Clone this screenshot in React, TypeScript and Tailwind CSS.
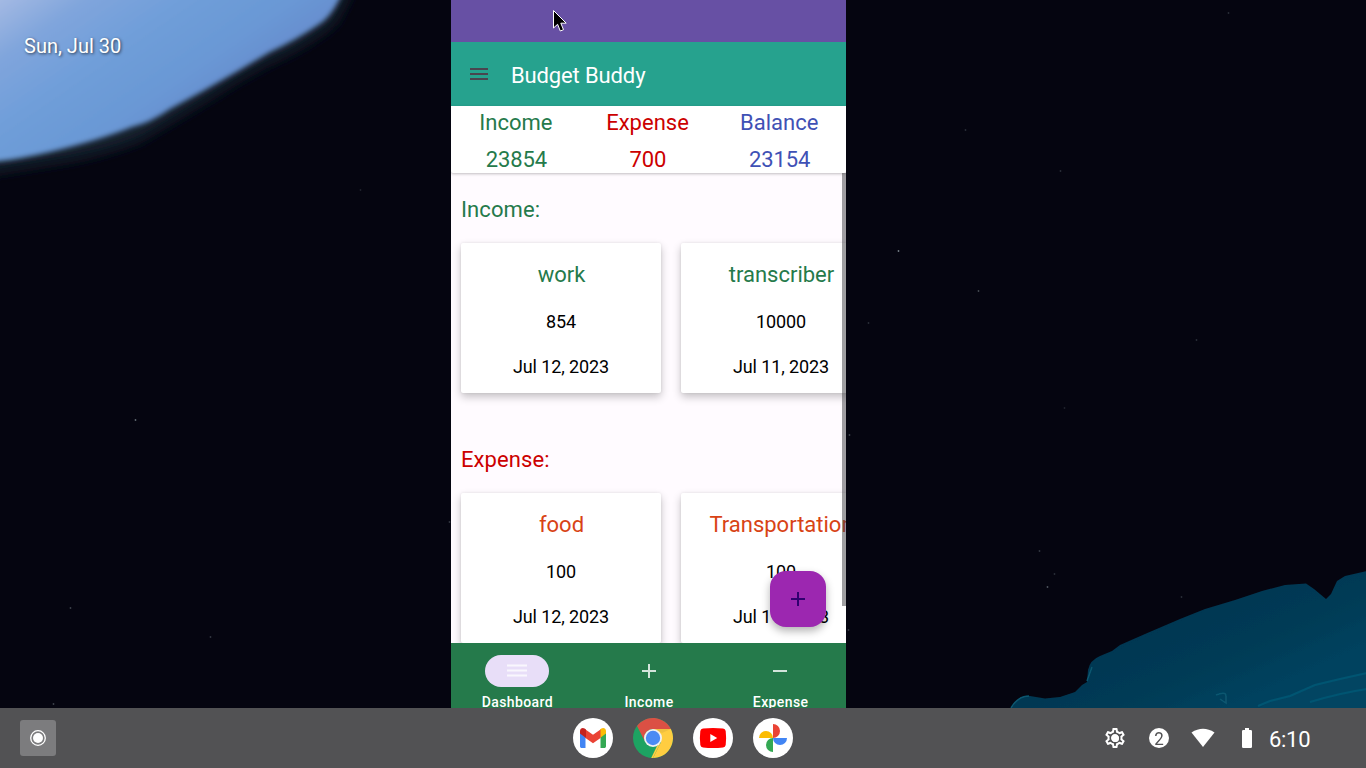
import React from "react";
import { MdOutlineSettings } from "react-icons/md";

type Entry = { name: string; amount: string; date: string };

const incomeEntries: Entry[] = [
  { name: "work", amount: "854", date: "Jul 12, 2023" },
  { name: "transcriber", amount: "10000", date: "Jul 11, 2023" },
];

const expenseEntries: Entry[] = [
  { name: "food", amount: "100", date: "Jul 12, 2023" },
  { name: "Transportation", amount: "100", date: "Jul 11, 2023" },
];

const stars = [
  [135, 420, 0.5], [70, 608, 0.3], [210, 637, 0.25], [898, 251, 0.6], [978, 291, 0.35],
  [868, 323, 0.2], [1060, 171, 0.2], [1047, 587, 0.4], [1054, 574, 0.2], [1181, 597, 0.2],
  [1228, 13, 0.2], [965, 130, 0.2], [1196, 340, 0.2], [53, 704, 0.3], [1064, 408, 0.15],
  [848, 630, 0.25], [449, 522, 0.25], [360, 190, 0.15], [1039, 551, 0.25], [849, 435, 0.3],
];

function Wallpaper() {
  return (
    <svg className="absolute inset-0" width="1366" height="708" viewBox="0 0 1366 708" aria-hidden="true">
      <defs>
        <linearGradient id="sky" gradientUnits="userSpaceOnUse" x1="0" y1="0" x2="110" y2="160">
          <stop offset="0" stopColor="#a3b9e3" />
          <stop offset="0.25" stopColor="#80a5dc" />
          <stop offset="0.55" stopColor="#6f9ed9" />
          <stop offset="0.85" stopColor="#6a98d5" />
          <stop offset="1" stopColor="#6790d0" />
        </linearGradient>
        <filter id="soft" x="-20%" y="-20%" width="140%" height="140%"><feGaussianBlur stdDeviation="2.4" /></filter>
        <filter id="halo" x="-20%" y="-30%" width="140%" height="160%"><feGaussianBlur stdDeviation="7" /></filter>
        <filter id="edge"><feGaussianBlur stdDeviation="0.6" /></filter>
        <linearGradient id="sea" gradientUnits="userSpaceOnUse" x1="1150" y1="610" x2="1200" y2="720">
          <stop offset="0" stopColor="#033550" />
          <stop offset="0.6" stopColor="#033b56" />
          <stop offset="1" stopColor="#02425e" />
        </linearGradient>
      </defs>
      <path d="M-30-30H356L346 2L334 24Q300 50 270 62L238 80L203 102L170 122L140 140Q100 156 50 163L-30 176Z" fill="#15212f" filter="url(#halo)" />
      <path d="M-30-30H354L339 0Q330 18 318 25Q296 40 270 52L238 71L203 91L170 109Q150 123 132 127Q100 140 50 152Q20 159 0 161L-30 165Z" fill="url(#sky)" filter="url(#soft)" />
      <path d="M1011 709L1015 703Q1021 694 1030 696L1045 698.5L1060 697L1075 692L1082 685L1087 682L1088 670Q1090 660 1100 656L1112 651L1120 645L1145 634L1180 619L1205 609L1235 600L1262 591L1285 585L1306 583.5L1314 589L1326 599L1331 594L1337 581L1345 576L1367 571V709Z" fill="url(#sea)" filter="url(#edge)" />
      <path d="M1258 709L1270 701L1290 695L1315 685L1340 679L1367 673V709Z" fill="#04486680" />
      <path d="M1258 706L1270 701L1290 696L1315 685L1340 679L1367 673M1310 702Q1340 693 1367 689" fill="none" stroke="#055572" strokeWidth="2" filter="url(#edge)" />
      <path d="M1011 708Q1018 696 1029 696M1087 681L1092 667M1216 695Q1226 691 1226 696V703L1220 699" fill="none" stroke="#0a5770" strokeWidth="1.5" filter="url(#edge)" />
      {stars.map(([x, y, o]) => (
        <circle key={`${x}-${y}`} cx={x + 0.5} cy={y} r="0.9" fill="#bfd0d5" opacity={o} />
      ))}
    </svg>
  );
}

function EntryCard({ entry, tone }: { entry: Entry; tone: string }) {
  return (
    <article className="flex h-[150px] w-[200px] shrink-0 flex-col items-center rounded-[2px] bg-white text-[18px] tracking-[-0.1px] text-black shadow-[0_4px_9px_rgba(0,0,0,0.23),0_0_3px_rgba(0,0,0,0.08)]">
      <h3 className={`mt-[17px] pl-px text-[22px] leading-[29px] tracking-normal whitespace-nowrap ${tone}`}>{entry.name}</h3>
      <p className="mt-[22px] leading-[22px]">{entry.amount}</p>
      <p className="mt-[23px] leading-[22px] whitespace-nowrap">{entry.date}</p>
    </article>
  );
}

function Section({ title, titleTone, tone, entries }: { title: string; titleTone: string; tone: string; entries: Entry[] }) {
  return (
    <section className="h-[250px] pl-[10px] pt-[22px]">
      <h2 className={`text-[22px] leading-[29px] tracking-[0.1px] ${titleTone}`}>{title}</h2>
      <div className="mt-[19px] flex gap-5">
        {entries.map((entry) => (
          <EntryCard key={entry.name} entry={entry} tone={tone} />
        ))}
      </div>
    </section>
  );
}

function Total({ label, value, tone }: { label: string; value: string; tone: string }) {
  return (
    <div className={`flex flex-col items-center pt-[2px] pr-[2px] text-[22px] leading-[29px] ${tone}`}>
      <span>{label}</span>
      <span className="mt-2 pl-px tracking-[-0.1px]">{value}</span>
    </div>
  );
}

function NavItem({ label, active, children }: { label: string; active?: boolean; children: React.ReactNode }) {
  return (
    <button className="flex flex-col items-center pt-3">
      <span className={`flex h-8 w-16 items-center justify-center rounded-full ${active ? "bg-[#e8def8]" : ""}`}>
        {children}
      </span>
      <span className="mt-[7px] pl-px text-[14px] leading-4 font-medium tracking-[0.4px] text-white">{label}</span>
    </button>
  );
}

function BudgetApp() {
  return (
    <main className="relative flex h-[708px] w-[395px] flex-col overflow-hidden bg-[#fffbff]">
      <div className="h-[42px] shrink-0 bg-[#6750a4]" />
      <header className="flex h-16 shrink-0 items-center bg-[#26a28e] pl-4 text-white">
        <svg className="shrink-0" width="24" height="24" viewBox="0 0 24 24" fill="#49454f">
          <path d="M3 6h18v2H3zM3 11h18v2H3zM3 16h18v2H3z" />
        </svg>
        <h1 className="ml-5 pt-[3px] text-[22px] leading-7 tracking-[-0.13px]">Budget Buddy</h1>
      </header>
      <div className="z-10 grid h-[67px] shrink-0 grid-cols-3 rounded-b-[2px] bg-white shadow-[0_1px_3px_rgba(0,0,0,0.25)]">
        <Total label="Income" value="23854" tone="text-[#257a4b]" />
        <Total label="Expense" value="700" tone="text-[#cc0000]" />
        <Total label="Balance" value="23154" tone="text-[#3f51b5]" />
      </div>
      <div className="relative h-[470px] shrink-0 overflow-hidden">
        <Section title="Income:" titleTone="text-[#257a4b]" tone="text-[#257a4b]" entries={incomeEntries} />
        <Section title="Expense:" titleTone="text-[#cc0000]" tone="text-[#d84315]" entries={expenseEntries} />
        <div className="absolute top-0 right-0 h-[433px] w-1 bg-[#403f43]/50" />
        <button className="absolute right-5 bottom-4 flex size-14 items-center justify-center rounded-2xl bg-[#9c27b0] shadow-[0_4px_8px_rgba(0,0,0,0.3)]">
          <svg width="24" height="24" viewBox="0 0 24 24" fill="#31006f"><path d="M11 5h2v6h6v2h-6v6h-2v-6H5v-2h6z" /></svg>
        </button>
      </div>
      <nav className="grid h-[65px] shrink-0 grid-cols-3 overflow-hidden bg-[#257a4b]">
        <NavItem label="Dashboard" active>
          <svg width="24" height="24" viewBox="0 0 24 24" fill="#fff">
            <path d="M2 5h20v3H2zM2 10h20v3H2zM2 15h20v3H2z" opacity="0.4" />
            <path d="M2 6h20v1H2zM2 11h20v1H2zM2 16h20v1H2z" opacity="0.6" />
          </svg>
        </NavItem>
        <NavItem label="Income">
          <svg className="ml-px" width="24" height="24" viewBox="0 0 24 24" fill="#d3e4db"><path d="M11 5h2v6h6v2h-6v6h-2v-6H5v-2h6z" /></svg>
        </NavItem>
        <NavItem label="Expense">
          <svg width="24" height="24" viewBox="0 0 24 24" fill="#d3e4db"><path d="M5 11h14v2H5z" /></svg>
        </NavItem>
      </nav>
    </main>
  );
}

function GmailIcon() {
  return (
    <svg width="40" height="40" viewBox="0 0 40 40">
      <circle cx="20" cy="20" r="20" fill="#fff" />
      <path d="M7 13v15.200c0 1 .8 1.800 1.800 1.800H12.500V17.500z" fill="#4285f4" />
      <path d="M27.500 30h3.700c1 0 1.800-.8 1.800-1.800V13l-5.500 4.500z" fill="#34a853" />
      <path d="M27 11.500v8.500l6-4.500V13c0-2.500-2.600-3.900-4.600-2.500z" fill="#fbbc04" />
      <path d="M12.500 20v-8.500l7.500 5.200 7.500-5.200V20l-7.500 5.200z" fill="#ea4335" />
      <path d="M7 13v2.500l6 4.500v-8.500l-1.400-1C9.600 9 7 10.500 7 13z" fill="#c5221f" />
    </svg>
  );
}

function ChromeIcon() {
  return (
    <svg width="40" height="40" viewBox="0 0 40 40">
      <circle cx="20" cy="20" r="20" fill="#1da362" />
      <path d="M20 11H37.860A20 20 0 0 1 20 40L27.800 24.500Z" fill="#ffcd41" />
      <path d="M4.020 8A20 20 0 0 1 37.860 11H20A9 9 0 0 0 12.200 24Z" fill="#db5044" />
      <path d="M20 40L27.800 24.500L24 28L18.200 40Z" fill="#ffcd41" />
      <path d="M20 11H37.860L29 15Z" fill="#d2aa3b" opacity="0.35" />
      <circle cx="20" cy="20" r="9" fill="#f1f1f1" />
      <circle cx="20" cy="20" r="7.200" fill="#4b8bf4" />
    </svg>
  );
}

function YoutubeIcon() {
  return (
    <svg width="40" height="40" viewBox="0 0 40 40">
      <circle cx="20" cy="20" r="20" fill="#fff" />
      <path d="M10 10.500Q20 9.500 30 10.500Q32.300 10.800 32.700 13Q33.500 20 32.700 27Q32.300 29.200 30 29.500Q20 30.500 10 29.500Q7.700 29.200 7.300 27Q6.500 20 7.300 13Q7.700 10.800 10 10.500Z" fill="#f00" />
      <path d="M17.300 16v8l6.900-4z" fill="#fff" />
    </svg>
  );
}

function PhotosIcon() {
  return (
    <svg width="40" height="40" viewBox="0 0 40 40">
      <circle cx="20" cy="20" r="20" fill="#fff" />
      <path d="M20 6a7 7 0 0 1 0 14z" fill="#ea4335" />
      <path d="M34 20a7 7 0 0 1-14 0z" fill="#4285f4" />
      <path d="M20 34a7 7 0 0 1 0-14z" fill="#34a853" />
      <path d="M6 20a7 7 0 0 1 14 0z" fill="#fbbc04" />
    </svg>
  );
}

function Shelf() {
  return (
    <footer className="relative grid h-[60px] grid-cols-[573px_1fr_auto] items-center bg-[#525254] text-white">
      <div className="pl-5">
        <button className="flex size-9 items-center justify-center rounded-[3px] bg-[#7c7c7e]">
          <svg width="18" height="18" viewBox="0 0 18 18">
            <circle cx="9" cy="9" r="7.300" fill="none" stroke="#fff" strokeWidth="1.300" />
            <circle cx="9" cy="9" r="5" fill="#fff" />
          </svg>
        </button>
      </div>
      <div className="flex gap-5">
        <GmailIcon />
        <ChromeIcon />
        <YoutubeIcon />
        <PhotosIcon />
      </div>
      <div className="flex w-[263px] items-center">
        <span className="grid place-items-center">
          <MdOutlineSettings className="col-start-1 row-start-1 size-6" />
          <span className="col-start-1 row-start-1 size-[7px] rounded-full bg-white" />
        </span>
        <span className="ml-[22px] flex size-5 items-center justify-center rounded-full bg-white text-[17px] leading-5 text-[#525254]"><span className="scale-y-110">2</span></span>
        <svg className="ml-[22px]" width="24" height="20" viewBox="0 0 24 20" fill="#fff"><path d="M12 19L.5 4.500Q12-3 23.500 4.500Z" /></svg>
        <svg className="ml-[27px]" width="10" height="20" viewBox="0 0 10 20" fill="#fff"><path d="M3 0h4v2h1.700Q10 2 10 3.300v15.400Q10 20 8.700 20H1.300Q0 20 0 18.700V3.300Q0 2 1.300 2H3z" /></svg>
        <time className="ml-[17px] pt-[3px] text-[22px] leading-7 tracking-[-0.3px]">6:10</time>
      </div>
    </footer>
  );
}

export default function App() {
  return (
    <div className="relative flex h-[768px] w-[1366px] flex-col overflow-hidden bg-[#050510] font-['Roboto',sans-serif]">
      <Wallpaper />
      <div className="relative grid h-[708px] grid-cols-[451px_395px_1fr]">
        <div className="pt-8 pl-6 text-[20px] leading-7 text-white [text-shadow:1px_1px_3px_rgba(0,0,0,0.65)]">Sun, Jul 30</div>
        <BudgetApp />
      </div>
      <Shelf />
      <svg className="absolute top-2 left-[551px]" width="18" height="26" viewBox="0 0 18 26">
        <path d="M2.500 2.500V20L6.600 16.300L9.300 23L12.500 21.700L9.800 15.200H15.200Z" fill="#000" stroke="#fff" strokeWidth="1" />
      </svg>
    </div>
  );
}
